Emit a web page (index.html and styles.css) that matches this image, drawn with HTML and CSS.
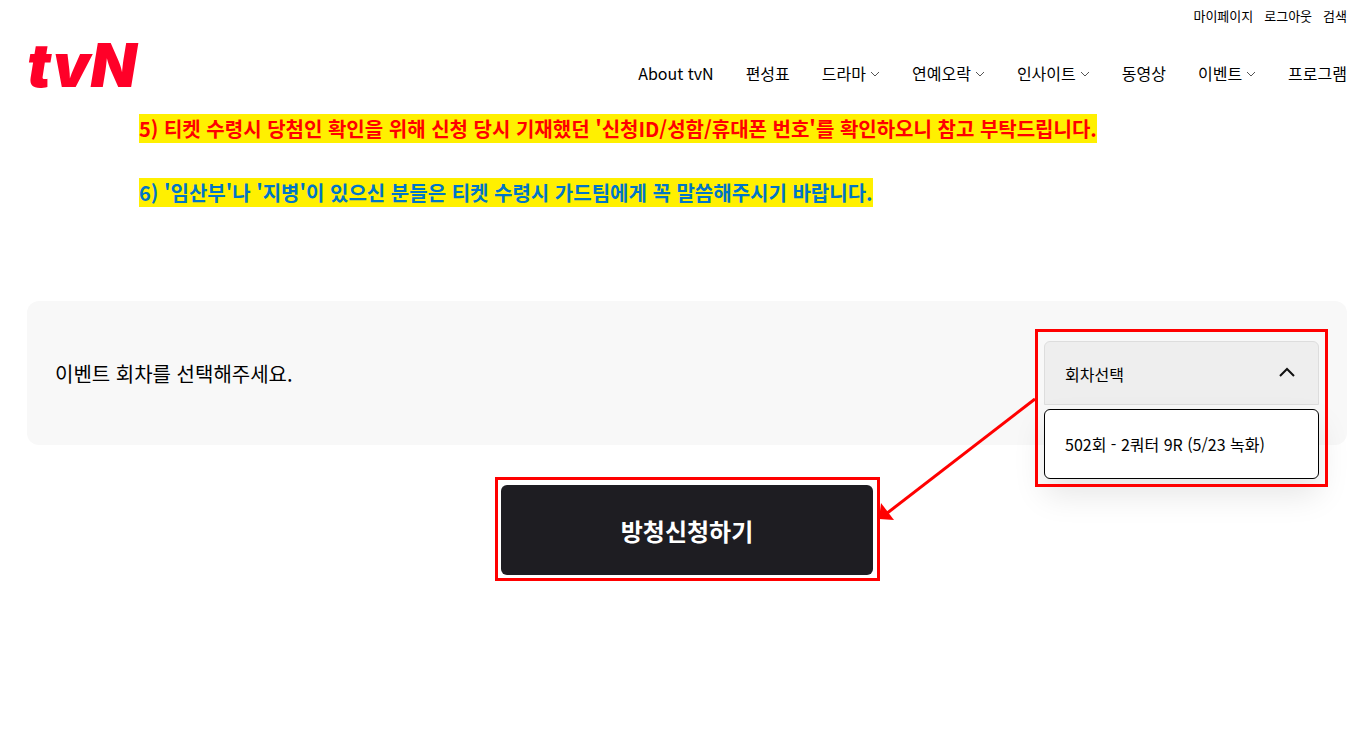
FILE: index.html
```html
<!DOCTYPE html>
<html lang="ko">
<head>
<meta charset="UTF-8">
<meta name="viewport" content="width=device-width, initial-scale=1.0">
<title>tvN 방청신청</title>
<link rel="stylesheet" href="styles.css">
</head>
<body>
<header class="header">
  <div class="util">
    <a href="#">마이페이지</a>
    <a href="#">로그아웃</a>
    <a href="#">검색</a>
  </div>
  <div class="header-main">
    <a class="logo" href="#">tvN</a>
    <nav class="gnb">
      <a href="#">About tvN</a>
      <a href="#">편성표</a>
      <a href="#">드라마<svg class="chev" viewBox="0 0 10 6"><path d="M1 1l4 4 4-4"/></svg></a>
      <a href="#">연예오락<svg class="chev" viewBox="0 0 10 6"><path d="M1 1l4 4 4-4"/></svg></a>
      <a href="#">인사이트<svg class="chev" viewBox="0 0 10 6"><path d="M1 1l4 4 4-4"/></svg></a>
      <a href="#">동영상</a>
      <a href="#">이벤트<svg class="chev" viewBox="0 0 10 6"><path d="M1 1l4 4 4-4"/></svg></a>
      <a href="#">프로그램</a>
    </nav>
  </div>
</header>

<main class="content">
  <div class="notice">
    <p><mark class="red">5) 티켓 수령시 당첨인 확인을 위해 신청 당시 기재했던 '신청ID/성함/휴대폰 번호'를 확인하오니 참고 부탁드립니다.</mark></p>
    <p><mark class="blue">6) '임산부'나 '지병'이 있으신 분들은 티켓 수령시 가드팀에게 꼭 말씀해주시기 바랍니다.</mark></p>
  </div>

  <section class="round">
    <label for="round">이벤트 회차를 선택해주세요.</label>
    <div class="picker">
      <select id="round">
        <option>회차선택</option>
        <option>502회 - 2쿼터 9R (5/23 녹화)</option>
      </select>
      <svg class="arrow-up" viewBox="0 0 16 10"><path d="M1 9l7-7 7 7"/></svg>
      <button type="button" class="picker-option">502회 - 2쿼터 9R (5/23 녹화)</button>
      <span class="guide guide-picker"></span>
      <svg class="guide-arrow" viewBox="0 0 160 126">
        <path class="line" d="M158 2L9 117"/>
        <path class="head" d="M2 122L4 106L17 123Z"/>
      </svg>
    </div>
  </section>

  <div class="apply">
    <button type="button" class="apply-btn">방청신청하기</button>
    <span class="guide guide-apply"></span>
  </div>
</main>
</body>
</html>
```

FILE: styles.css
```css
* {
  box-sizing: border-box;
}
body {
  margin: 0;
  padding: 0 12px 0 27px;
  font-family: "Noto Sans CJK KR", sans-serif;
  font-size: 16px;
  color: #000;
  background: #fff;
}
a {
  color: inherit;
  text-decoration: none;
}
button, select {
  font: inherit;
  color: inherit;
  cursor: pointer;
}

/* header */
.util {
  display: flex;
  justify-content: flex-end;
  gap: 11px;
  padding-top: 6px;
  font-size: 13px;
  line-height: 20px;
}
.header-main {
  display: flex;
  justify-content: space-between;
  align-items: center;
  height: 76px;
}
.logo {
  padding-top: 2px;
  font-family: Inter, sans-serif;
  font-size: 60px;
  font-weight: 900;
  font-style: italic;
  line-height: 60px;
  color: #ff0028;
}
.gnb {
  display: flex;
  gap: 32px;
  padding-top: 18px;
  line-height: 24px;
}
.gnb a {
  display: flex;
  align-items: center;
}
.chev {
  width: 10px;
  height: 6px;
  margin: 2px 0 0 4px;
  fill: none;
  stroke: #555;
}

/* notice */
.content {
  padding-bottom: 175px;
}
.notice {
  padding: 11px 112px 0;
  font-size: 20px;
  font-weight: 700;
  line-height: 32px;
}
.notice p {
  margin: 0 0 32px;
}
.notice mark {
  background: #fff000;
}
.notice .red {
  color: #ff0000;
}
.notice .blue {
  color: #0075c8;
}

/* round select */
.round {
  position: relative;
  display: flex;
  justify-content: space-between;
  align-items: center;
  margin-top: 92px;
  padding: 40px 28px;
  font-size: 20px;
  background: #f8f8f8;
  border-radius: 12px;
}
.picker {
  position: relative;
  width: 275px;
  font-size: 16px;
}
.picker select {
  display: block;
  width: 100%;
  height: 64px;
  padding: 2px 20px 0;
  appearance: none;
  background: #eee;
  border: 1px solid #ddd;
  border-radius: 6px 6px 0 0;
}
.arrow-up {
  position: absolute;
  top: 26px;
  right: 24px;
  width: 16px;
  height: 10px;
  fill: none;
  stroke: #111;
  stroke-width: 2;
  pointer-events: none;
}
.picker-option {
  position: absolute;
  top: 68px;
  left: 0;
  width: 100%;
  height: 70px;
  padding: 0 20px;
  text-align: left;
  background: #fff;
  border: 1px solid #000;
  border-radius: 6px;
  box-shadow: 0 16px 32px rgba(0, 0, 0, 0.1);
}

/* apply button */
.apply {
  position: relative;
  width: 372px;
  margin: 40px auto 0;
}
.apply-btn {
  display: block;
  width: 100%;
  height: 90px;
  font-size: 24px;
  font-weight: 700;
  color: #fff;
  background: #1e1d22;
  border: 0;
  border-radius: 6px;
}

/* red guide marks */
.guide {
  position: absolute;
  border: 3px solid #ff0000;
  pointer-events: none;
}
.guide-picker {
  top: -12px;
  left: -9px;
  right: -9px;
  height: 158px;
}
.guide-apply {
  top: -8px;
  right: -7px;
  bottom: -6px;
  left: -6px;
}
.guide-arrow {
  position: absolute;
  top: 56px;
  right: 282px;
  width: 160px;
  height: 126px;
  pointer-events: none;
}
.guide-arrow .line {
  stroke: #ff0000;
  stroke-width: 3;
}
.guide-arrow .head {
  fill: #ff0000;
}
```
